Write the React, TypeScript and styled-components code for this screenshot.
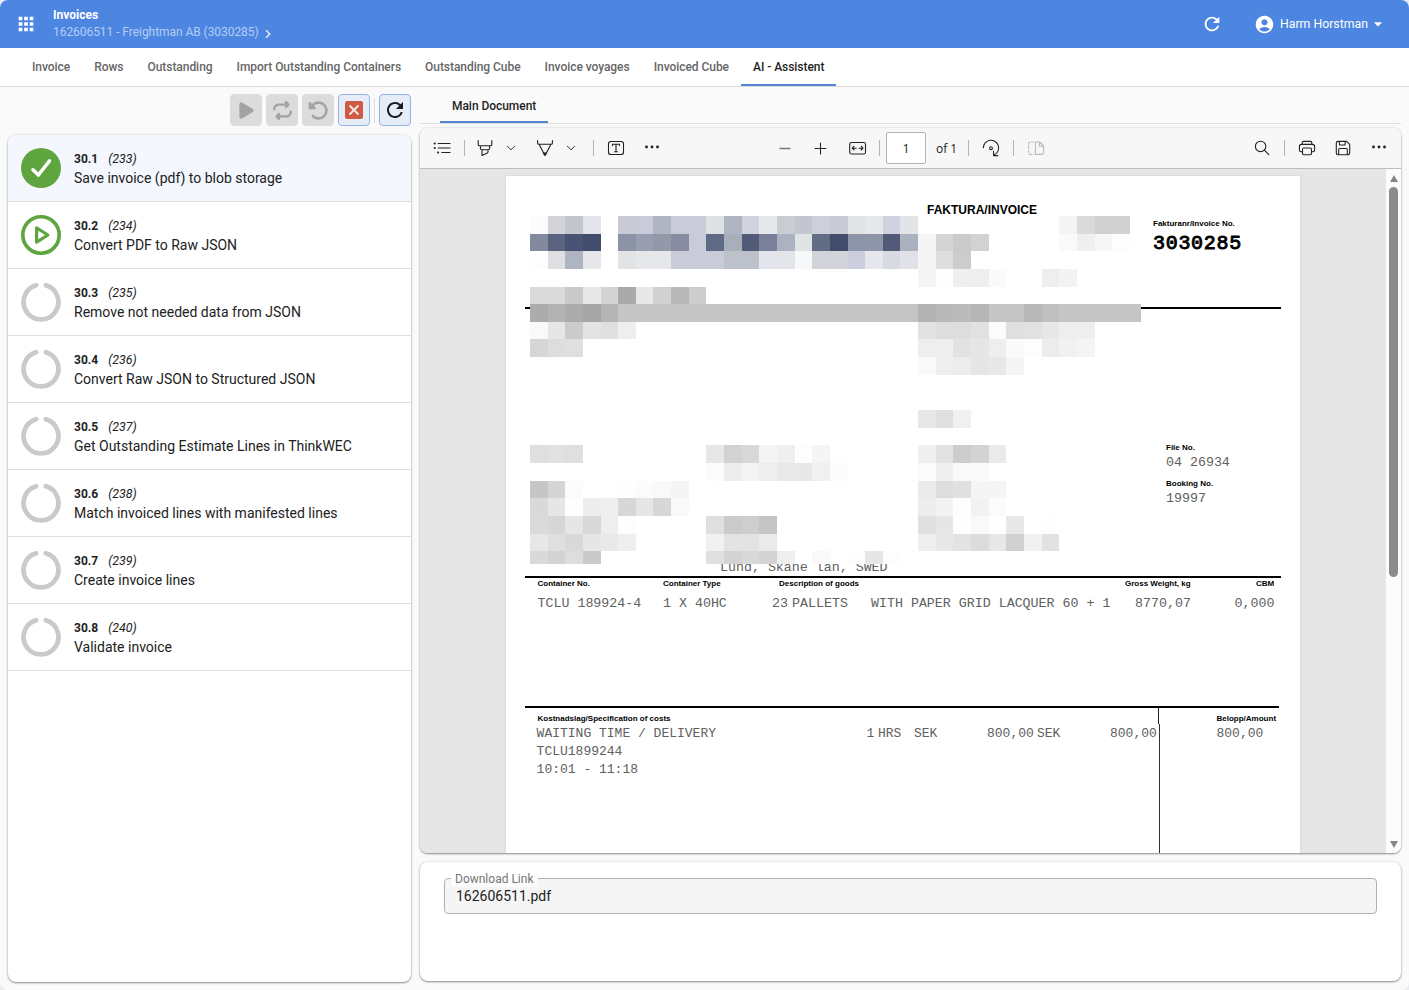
import React from "react";
import styled, { createGlobalStyle, css } from "styled-components";
import { MdApps, MdRefresh, MdAccountCircle, MdArrowDropDown } from "react-icons/md";
import { FaPlay, FaRepeat, FaRotateLeft } from "react-icons/fa6";

const Global = createGlobalStyle`
  * { box-sizing: border-box; }
  body { margin: 0; background: #e9ecf1; font-family: Roboto, sans-serif; color: #212121; }
`;

const Shell = styled.div`
  width: 1409px;
  height: 990px;
  display: flex;
  flex-direction: column;
  background: #fafafa;
  border-radius: 8px;
  overflow: hidden;
`;

/* ---------- application header ---------- */

const Header = styled.header`
  height: 48px;
  flex: none;
  display: flex;
  align-items: center;
  padding: 0 21px 0 15px;
  background: #4d86e1;
  color: #fff;
  svg { flex: none; }
`;

const Crumbs = styled.div`
  flex: 1;
  margin-left: 16px;
  font-size: 12px;
  line-height: 17px;
`;

const CrumbTitle = styled.div`
  font-weight: 700;
`;

const CrumbPath = styled.div`
  display: flex;
  align-items: center;
  color: #b5cdf5;
  font-size: 12px;
  letter-spacing: -0.05px;
  svg { margin: 2px 0 0 5px; }
`;

const User = styled.div`
  display: flex;
  align-items: center;
  margin-left: 31px;
  font-size: 12.3px;
  span { margin: 0 0 1px 5px; }
`;

const Tabs = styled.nav<{ $inner?: boolean }>`
  display: flex;
  flex: none;
  height: ${(p) => (p.$inner ? 37 : 39)}px;
  padding-left: 20px;
  background: ${(p) => (p.$inner ? "transparent" : "#fff")};
  border-bottom: 1px solid #dcdcdc;
`;

const Tab = styled.div<{ $active?: boolean; $drop?: number }>`
  display: flex;
  align-items: center;
  padding: ${(p) => p.$drop ?? 0}px 12px 0;
  font-size: 12px;
  font-weight: 500;
  letter-spacing: -0.045px;
  white-space: nowrap;
  color: ${(p) => (p.$active ? "#1f1f1f" : "#666")};
  box-shadow: ${(p) => (p.$active ? "inset 0 -2px 0 #5584d0" : "none")};
`;

/* ---------- columns ---------- */

const Columns = styled.main`
  flex: 1;
  min-height: 0;
  display: grid;
  grid-template-columns: 403px 981px;
  column-gap: 9px;
  padding: 0 8px;
`;

const Column = styled.section`
  display: flex;
  flex-direction: column;
  min-height: 0;
`;

const Actions = styled.div`
  display: flex;
  justify-content: flex-end;
  align-items: flex-start;
  gap: 4px;
  height: 48px;
  padding-top: 7px;
  flex: none;
`;

const ActionButton = styled.button<{ $enabled?: boolean }>`
  width: 32px;
  height: 32px;
  padding: 0;
  display: flex;
  align-items: center;
  justify-content: center;
  border-radius: 4px;
  border: 1px solid #dcdcdc;
  background: #dcdcdc;
  color: #a3a3a3;
  ${(p) =>
    p.$enabled &&
    css`
      border-color: #93b3ea;
      background: #e6edf9;
      color: #1b1b1b;
    `}
`;

const ActionDivider = styled.div`
  width: 1px;
  height: 25px;
  margin-top: 4px;
  background: #ddd;
`;

const Card = styled.div`
  background: #fff;
  border-radius: 8px;
  box-shadow: 0 1px 2px rgba(0, 0, 0, 0.42), 0 0 3px rgba(0, 0, 0, 0.12);
  overflow: hidden;
`;

const StepList = styled(Card)`
  height: 847px;
`;

const Step = styled.div<{ $selected?: boolean }>`
  height: 67px;
  display: flex;
  align-items: center;
  gap: 13px;
  padding-left: 13px;
  border-bottom: 1px solid #dedede;
  background: ${(p) => (p.$selected ? "#f4f8fe" : "#fff")};
`;

const StepMeta = styled.div`
  display: flex;
  gap: 10px;
  padding-top: 1px;
  font-size: 12px;
  line-height: 19px;
  i { font-size: 12.4px; line-height: 17px; }
`;

const StepName = styled.div`
  font-size: 14px;
  line-height: 19px;
`;

/* ---------- document viewer ---------- */

const Viewer = styled(Card)`
  height: 725px;
  margin-top: 4px;
  flex: none;
  display: flex;
  flex-direction: column;
`;

const ViewerBar = styled.div`
  height: 41px;
  flex: none;
  display: flex;
  align-items: center;
  padding: 0 6px;
  background: #f7f7f7;
  border-bottom: 1px solid #bcbcbc;
  color: #222;
  font-size: 13px;
`;

const ToolGroup = styled.div<{ $before?: string }>`
  display: flex;
  align-items: center;
  margin-left: ${(p) => p.$before ?? "0"};
`;

const Tool = styled.span<{ $w?: number; $before?: number }>`
  width: ${(p) => p.$w ?? 32}px;
  height: 32px;
  margin-left: ${(p) => p.$before ?? 0}px;
  display: flex;
  align-items: center;
  justify-content: center;
`;

const ToolDivider = styled.span<{ $before: number; $after: number }>`
  width: 1px;
  height: 16px;
  margin: 0 ${(p) => p.$after}px 0 ${(p) => p.$before}px;
  background: #b4b4b4;
`;

const PageInput = styled.div`
  width: 40px;
  height: 32px;
  display: flex;
  align-items: center;
  justify-content: center;
  border: 1px solid #b3b3b3;
  border-radius: 2px;
  background: #fff;
  font-family: "Open Sans", sans-serif;
  font-size: 12.5px;
`;

const PageTotal = styled.span`
  width: 22px;
  margin-left: 10px;
  padding-top: 1px;
  white-space: nowrap;
  font-family: "Open Sans", sans-serif;
  font-size: 12px;
`;

const ViewerBody = styled.div`
  flex: 1;
  min-height: 0;
  display: flex;
  justify-content: space-between;
  background: #e6e6e6;
`;

const Paper = styled.article`
  position: relative;
  width: 794px;
  margin: 7px 0 0 86px;
  display: flex;
  flex-direction: column;
  background: #fff;
  box-shadow: 0 0 4px rgba(0, 0, 0, 0.08);
  color: #000;
`;

const ScrollTrack = styled.div`
  width: 15px;
  display: flex;
  flex-direction: column;
  align-items: center;
  padding: 6px 0 5px 0;
  background: #fcfcfc;
`;

const ScrollThumb = styled.div`
  width: 9px;
  height: 390px;
  margin: 5px 0 auto;
  border-radius: 5px;
  background: #8b8b8b;
`;

const Arrow = styled.span<{ $down?: boolean }>`
  border: 4.5px solid transparent;
  border-top: ${(p) => (p.$down ? "7px solid #858585" : "0")};
  border-bottom: ${(p) => (p.$down ? "0" : "7px solid #858585")};
`;

/* ---------- invoice page ---------- */

const Small = styled.div`
  font: bold 8px/12px "Liberation Sans", Arial, sans-serif;
  white-space: pre;
`;

const Typed = styled.div<{ $size?: number }>`
  font: ${(p) => p.$size ?? 13.3}px/18px "Liberation Mono", "Courier New", monospace;
  color: #606060;
  white-space: pre;
`;

const Rule = styled.div<{ $right?: number }>`
  height: 2px;
  flex: none;
  margin: 0 ${(p) => p.$right ?? 19}px 0 19px;
  background: #000;
`;

const Letterhead = styled.div`
  display: flex;
  height: 131px;
  padding: 26px 0 0 421px;
`;

const DocTitle = styled.div`
  width: 226px;
  font: bold 12px/16px "Liberation Sans", Arial, sans-serif;
`;

const InvoiceNumber = styled.div`
  padding-top: 16px;
`;

const BigNumber = styled.div`
  margin-top: 2px;
  font: 20px/24px "Liberation Mono", "Courier New", monospace;
  letter-spacing: 0.7px;
  -webkit-text-stroke: 0.9px #000;
`;

const Parties = styled.div`
  height: 267px;
  display: flex;
  flex-direction: column;
  justify-content: space-between;
  padding-top: 133px;
`;

const References = styled.div`
  margin-left: 660px;
  ${Typed} { margin-bottom: 6px; }
`;

const CityLine = styled(Typed)`
  margin: 0 0 -1px 214px;
`;

const Row = styled.div<{ $top?: number }>`
  display: flex;
  margin-top: ${(p) => p.$top ?? 0}px;
`;

const Cell = styled.div<{ $w: number }>`
  width: ${(p) => p.$w}px;
  flex: none;
`;

const Goods = styled.div`
  height: 128px;
  padding-left: 31.5px;
`;

const Costs = styled.div`
  display: flex;
  flex: 1;
`;

const CostLines = styled.div`
  width: 652px;
  padding: 5px 0 0 30.6px;
  ${Small} { padding-left: 1px; }
`;

const CostDivider = styled.div`
  width: 2px;
  display: flex;
  flex-direction: column;
  &::before { content: ""; width: 1px; height: 16px; background: #222; }
  &::after { content: ""; width: 1px; flex: 1; margin-left: 1px; background: #333; }
`;

const Amounts = styled.div`
  padding: 5px 0 0 56.5px;
`;

const Redaction = styled.div`
  position: absolute;
  left: 24px;
  top: 40px;
  display: grid;
  grid-template-columns: repeat(34, 17.648px) 11px;
  grid-template-rows: repeat(19, 17.648px) 12.7px;
`;

const Block = styled.span<{ $r: number; $c: number; $fill: string }>`
  grid-row: ${(p) => p.$r + 1};
  grid-column: ${(p) => p.$c + 1};
  background: ${(p) => p.$fill};
`;

/* Each run: row, first column, space-separated fills (two digits = grey level). */
const runs: [number, number, string][] = [
  [0, 0, "fc d3d4da c3c6cf e4e5ea"],
  [0, 5, "c8cbd6 c9ccd8 b0b5c4 c9cbd8 c9cbd8 dee1e4 b0b5c4 d1d4df e6e8ec c9ccd3 c2c6d0 cdd0d9 c8cbd4 e2e3e5 e6e7ea d0d3df e2e4e8"],
  [0, 30, "f4 da d0 d1"],
  [1, 0, "838a9d 5a6480 475275 424c6b"],
  [1, 5, "8c93a4 979eaf 9499aa 878ca0 c9cbd8 5f6a87 a9afba 515b78 7a809a adb2c2 e0e3e4 626c84 424c6b 8d94a8 8d95a9 515b78 acb1bf f5 d4 cb d2"],
  [1, 30, "fa ef f7 fd"],
  [2, 0, "fd dfe0e4 afb4c3 e6e7ea"],
  [2, 5, "e2e3e5 e6e7ea e6e7ea c9cbd8 c9cbd8 c9ccd8 bcc1ca bcc1cc e4e5ec e4e5ea f7f8fa d3d4da d3d4da cdcedd e6e7ed d8dae1 e1e2e8 f5 de cc"],
  [3, 22, "f5 fe ef ee fa"],
  [3, 29, "ee f3"],
  [4, 0, "da da ca e7 d3 aa e7 d1 b8 cd"],
  [5, 0, "ac b3 ab a5 b5 c5 c5 c5 c5 c5 c5 c5 c5 c5 c5 c5 c5 c5 c5 c5 c5 c5 b3 b9 bb b6 c5 c5 b8 c0 c5 c5 c5 c5 c5"],
  [6, 0, "f9 e6 cb e3 e0 ee"],
  [6, 22, "e2 dd dd e1 fb df e1 e7 ee ee"],
  [7, 0, "d6 dd df"],
  [7, 22, "ee ee e2 e6 ee fa fd ec f1 f4"],
  [8, 22, "fa ef ec e6 e8 f5"],
  [11, 22, "e7 e0 f0"],
  [13, 0, "df e1 df"],
  [13, 10, "e7 d2 d8 f4 ef fd f5"],
  [13, 22, "ef e1 cd d3 ea"],
  [14, 10, "fb ed f4 ee e9 e8 f0 fb"],
  [14, 22, "fb ef f9 fa"],
  [15, 0, "c6 d5 fb ff ff fe fb f9 f5"],
  [15, 22, "ea dd e0 f5 f5"],
  [16, 0, "d9 e6 fe ed ef d7 e6 d7 f9"],
  [16, 22, "ed f3 fe f2 fb"],
  [17, 0, "da d7 e6 d8 ee fd"],
  [17, 10, "df cb ce c5"],
  [17, 22, "e0 e6 fe f9 ff e8 ff fe"],
  [18, 0, "e7 df d9 e6 e9 ef"],
  [18, 10, "f1 e3 e3 ea"],
  [18, 22, "ef e7 e3 dc e7 d0 f1 e2"],
  [19, 0, "d9 d3 dd ca"],
  [19, 10, "e0 d3 d9 d3 ef ff f9 ff fd e6 fd"],
];

/* ---------- download card ---------- */

const DownloadCard = styled(Card)`
  height: 119px;
  margin-top: 9px;
  padding: 16px 24px;
  flex: none;
`;

const Field = styled.div`
  position: relative;
  height: 36px;
  padding-left: 11px;
  border: 1px solid #b0b0b0;
  border-radius: 4px;
  background: #f5f5f5;
  font-size: 14px;
  line-height: 35px;
`;

const FieldLabel = styled.label`
  position: absolute;
  left: 6px;
  top: -8px;
  padding: 0 4px;
  font-size: 12px;
  line-height: 16px;
  color: #777;
  background: linear-gradient(#fff 8px, #fbfbfb 8px);
`;

/* ---------- drawings ---------- */

const Icon = ({ w = 20, h = 20, children }: { w?: number; h?: number; children: React.ReactNode }) => (
  <svg width={w} height={h} viewBox={`0 0 ${w} ${h}`} fill="none" stroke="currentColor" strokeWidth="1.1" strokeLinejoin="round" strokeLinecap="round">
    {children}
  </svg>
);

const StatusIcon = ({ state }: { state: string }) => (
  <svg width="40" height="40" viewBox="0 0 40 40" fill="none" strokeLinecap="round" strokeLinejoin="round">
    {state === "done" && (
      <>
        <circle cx="20" cy="20" r="20" fill="#5ea540" />
        <path d="M12 21.8 L17.4 27 L28.4 13" stroke="#fff" strokeWidth="3.6" />
      </>
    )}
    {state === "running" && (
      <>
        <circle cx="20" cy="20" r="18.2" stroke="#5ea540" strokeWidth="3.6" />
        <path d="M15.6 12.9 V27.1 L26.9 20 Z" stroke="#5ea540" strokeWidth="3.2" />
      </>
    )}
    {state === "waiting" && <path d="M24.9 3.3 A17.4 17.4 0 1 1 15.1 3.3" stroke="#cacaca" strokeWidth="4.8" />}
  </svg>
);

const Chevron = () => (
  <Icon w={10} h={8}><path d="M1.3 2.2 L5 5.8 L8.7 2.2" strokeWidth="0.9" /></Icon>
);

const Dots = () => (
  <Icon w={16} h={6}>
    {[2.5, 8, 13.5].map((x) => <circle key={x} cx={x} cy="2" r="1.45" fill="currentColor" stroke="none" />)}
  </Icon>
);

const steps = [
  ["30.1", 233, "Save invoice (pdf) to blob storage", "done"],
  ["30.2", 234, "Convert PDF to Raw JSON", "running"],
  ["30.3", 235, "Remove not needed data from JSON", "waiting"],
  ["30.4", 236, "Convert Raw JSON to Structured JSON", "waiting"],
  ["30.5", 237, "Get Outstanding Estimate Lines in ThinkWEC", "waiting"],
  ["30.6", 238, "Match invoiced lines with manifested lines", "waiting"],
  ["30.7", 239, "Create invoice lines", "waiting"],
  ["30.8", 240, "Validate invoice", "waiting"],
] as const;

const tabs = ["Invoice", "Rows", "Outstanding", "Import Outstanding Containers", "Outstanding Cube", "Invoice voyages", "Invoiced Cube", "AI - Assistent"];

const InvoicePage = () => (
  <Paper>
    <Letterhead>
      <DocTitle>FAKTURA/INVOICE</DocTitle>
      <InvoiceNumber>
        <Small>Fakturanr/Invoice No.</Small>
        <BigNumber>3030285</BigNumber>
      </InvoiceNumber>
    </Letterhead>
    <Rule />
    <Parties>
      <References>
        <Small>File No.</Small>
        <Typed>04 26934</Typed>
        <Small>Booking No.</Small>
        <Typed>19997</Typed>
      </References>
      <CityLine>Lund, Skåne lan, SWED</CityLine>
    </Parties>
    <Rule />
    <Goods>
      <Row>
        <Cell $w={125.5}><Small>Container No.</Small></Cell>
        <Cell $w={116}><Small>Container Type</Small></Cell>
        <Cell $w={346}><Small>Description of goods</Small></Cell>
        <Cell $w={131}><Small>Gross Weight, kg</Small></Cell>
        <Small>CBM</Small>
      </Row>
      <Row $top={5}>
        <Cell $w={125.5}><Typed>TCLU 189924-4</Typed></Cell>
        <Cell $w={109}><Typed>1 X 40HC</Typed></Cell>
        <Cell $w={20}><Typed>23</Typed></Cell>
        <Cell $w={79}><Typed>PALLETS</Typed></Cell>
        <Cell $w={264}><Typed>WITH PAPER GRID LACQUER 60 + 1</Typed></Cell>
        <Cell $w={99.5}><Typed>8770,07</Typed></Cell>
        <Typed>0,000</Typed>
      </Row>
    </Goods>
    <Rule $right={21} />
    <Costs>
      <CostLines>
        <Small>Kostnadslag/Specification of costs</Small>
        <Row>
          <Cell $w={329.9}><Typed $size={13}>WAITING TIME / DELIVERY</Typed></Cell>
          <Cell $w={11.5}><Typed $size={13}>1</Typed></Cell>
          <Cell $w={36}><Typed $size={13}>HRS</Typed></Cell>
          <Cell $w={73}><Typed $size={13}>SEK</Typed></Cell>
          <Cell $w={50}><Typed $size={13}>800,00</Typed></Cell>
          <Cell $w={73}><Typed $size={13}>SEK</Typed></Cell>
          <Typed $size={13}>800,00</Typed>
        </Row>
        <Typed $size={13}>TCLU1899244</Typed>
        <Typed $size={13}>10:01 - 11:18</Typed>
      </CostLines>
      <CostDivider />
      <Amounts>
        <Small>Belopp/Amount</Small>
        <Typed $size={13}>800,00</Typed>
      </Amounts>
    </Costs>
    <Redaction>
      {runs.flatMap(([r, c, fills]) =>
        fills.split(" ").map((f, i) => (
          <Block key={`${r}-${c + i}`} $r={r} $c={c + i} $fill={`#${f.length === 2 ? f + f + f : f}`} />
        ))
      )}
    </Redaction>
  </Paper>
);

const Toolbar = () => (
  <ViewerBar>
    <ToolGroup>
      <Tool>
        <Icon>
          <path d="M6.2 5.5 H18 M6.2 10 H18 M9.8 14.5 H18" strokeWidth="1.2" />
          <path d="M2.6 5.5 h.2 M2.6 10 h.2 M6 14.5 h.2" strokeWidth="1.9" />
        </Icon>
      </Tool>
      <ToolDivider $before={6} $after={4} />
      <Tool>
        <Icon>
          <path d="M3.2 2.5 V6.5 Q3.2 7.8 4.5 7.8 H15.5 Q16.8 7.8 16.8 6.5 V2.5 M5.4 8 V10.2 Q5.4 11.7 6.9 11.7 H13.1 Q14.6 11.7 14.6 10.2 V8 M7 11.8 V17.4 L12.3 14.9 Q13 14.5 13 13.8 V11.8" />
        </Icon>
      </Tool>
      <Tool $w={20}><Chevron /></Tool>
      <Tool $before={8}>
        <Icon>
          <path d="M2.6 2.5 V5 Q2.6 6.3 3.9 6.3 H16.1 Q17.4 6.3 17.4 5 V2.5 M4.2 6.5 L9.4 16.6 Q10 17.6 10.6 16.6 L15.8 6.5" />
          <path d="M8.4 14.8 H11.6 L10.4 17.2 H9.6 Z" fill="currentColor" strokeWidth="0.6" />
        </Icon>
      </Tool>
      <Tool $w={20}><Chevron /></Tool>
      <ToolDivider $before={12} $after={6} />
      <Tool>
        <Icon>
          <rect x="2.5" y="3.5" width="15" height="13" rx="2.3" />
          <path d="M6.5 7.6 V6.3 H13.5 V7.6 M10 6.3 V13.8 M8.6 13.8 H11.4" />
        </Icon>
      </Tool>
      <Tool $before={4}><Dots /></Tool>
    </ToolGroup>
    <ToolGroup $before="101px">
      <Tool><Icon><path d="M5 10.5 H15" stroke="#777" strokeWidth="1.3" /></Icon></Tool>
      <Tool $before={3}><Icon><path d="M5 10.5 H16 M10.5 5 V16" /></Icon></Tool>
      <Tool $before={6}>
        <Icon>
          <rect x="1.7" y="4.5" width="15.8" height="11.5" rx="1.8" />
          <path d="M4.4 10.2 H8.2 M11 10.2 H14.8 M6 8.4 L4.2 10.2 L6 12 M13.2 8.4 L15 10.2 L13.2 12" />
        </Icon>
      </Tool>
      <ToolDivider $before={5} $after={6} />
      <PageInput>1</PageInput>
      <PageTotal>of 1</PageTotal>
      <ToolDivider $before={10} $after={6} />
      <Tool>
        <Icon>
          <path d="M2.3 9.8 A7.7 7.7 0 1 1 13.5 16.8 M12.6 13.2 V17.6 H16.8" />
          <circle cx="10" cy="10.2" r="1.4" />
        </Icon>
      </Tool>
      <ToolDivider $before={6} $after={6} />
      <Tool>
        <Icon>
          <g stroke="#b9b9b9">
            <path d="M9.4 4 V16.4 H16 Q17.6 16.4 17.6 14.8 V8 L13.6 4 Z M13.4 4.2 V8.2 H17.4" />
            <path d="M7.4 4 H4.2 Q2.6 4 2.6 5.6 V14.8 Q2.6 16.4 4.2 16.4 H7.4" strokeDasharray="2.2 1.8" />
          </g>
        </Icon>
      </Tool>
    </ToolGroup>
    <ToolGroup $before="auto">
      <Tool><Icon><circle cx="8.6" cy="8.4" r="5.2" /><path d="M12.4 12.2 L16.8 16.6" /></Icon></Tool>
      <ToolDivider $before={6} $after={6} />
      <Tool>
        <Icon>
          <path d="M5.5 13.8 H4 Q2.4 13.8 2.4 12.2 V8.6 Q2.4 6.4 4.6 6.4 H15.4 Q17.6 6.4 17.6 8.6 V12.2 Q17.6 13.8 16 13.8 H14.5 M5.2 6.3 V4.8 Q5.2 3.4 6.6 3.4 H13.4 Q14.8 3.4 14.8 4.8 V6.3" />
          <rect x="5.5" y="10" width="9" height="6.7" rx="1.2" />
        </Icon>
      </Tool>
      <Tool $before={4}>
        <Icon>
          <path d="M5 3.4 H13.6 L16.7 6.4 V15 Q16.7 16.7 15 16.7 H5 Q3.3 16.7 3.3 15 V5 Q3.3 3.4 5 3.4 Z M6.3 3.5 V6 Q6.3 7 7.3 7 H11.2 Q12.2 7 12.2 6 V3.5 M5.7 16.6 V11.6 Q5.7 10.5 6.8 10.5 H13.2 Q14.3 10.5 14.3 11.6 V16.6" />
        </Icon>
      </Tool>
      <Tool $before={4}><Dots /></Tool>
    </ToolGroup>
  </ViewerBar>
);

export default function App() {
  return (
    <Shell>
      <Global />
      <Header>
        <MdApps size={22} />
        <Crumbs>
          <CrumbTitle>Invoices</CrumbTitle>
          <CrumbPath>
            162606511 - Freightman AB (3030285)
            <svg width="8" height="10" viewBox="0 0 8 10" fill="none" stroke="#e4eefc" strokeWidth="1.5"><path d="M2 1.2 L5.8 5 L2 8.8" /></svg>
          </CrumbPath>
        </Crumbs>
        <MdRefresh size={22} />
        <User>
          <MdAccountCircle size={21} />
          <span>Harm Horstman</span>
          <MdArrowDropDown size={20} />
        </User>
      </Header>
      <Tabs>
        {tabs.map((t) => <Tab key={t} $active={t === "AI - Assistent"}>{t}</Tab>)}
      </Tabs>
      <Columns>
        <Column>
          <Actions>
            <ActionButton><FaPlay size={19} /></ActionButton>
            <ActionButton><FaRepeat size={19} /></ActionButton>
            <ActionButton><FaRotateLeft size={21} /></ActionButton>
            <ActionButton $enabled>
              <svg width="18" height="18" viewBox="0 0 18 18">
                <rect width="18" height="18" rx="2" fill="#cf5b43" />
                <path d="M4.5 4.5 L13.5 13.5 M13.5 4.5 L4.5 13.5" stroke="#f6e6ea" strokeWidth="1.9" />
              </svg>
            </ActionButton>
            <ActionDivider />
            <ActionButton $enabled><MdRefresh size={24} /></ActionButton>
          </Actions>
          <StepList>
            {steps.map(([no, id, name, state], i) => (
              <Step key={no} $selected={i === 0}>
                <StatusIcon state={state} />
                <div>
                  <StepMeta><b>{no}</b><i>({id})</i></StepMeta>
                  <StepName>{name}</StepName>
                </div>
              </Step>
            ))}
          </StepList>
        </Column>
        <Column>
          <Tabs $inner><Tab $active $drop={2}>Main Document</Tab></Tabs>
          <Viewer>
            <Toolbar />
            <ViewerBody>
              <InvoicePage />
              <ScrollTrack><Arrow /><ScrollThumb /><Arrow $down /></ScrollTrack>
            </ViewerBody>
          </Viewer>
          <DownloadCard>
            <Field>
              <FieldLabel>Download Link</FieldLabel>
              162606511.pdf
            </Field>
          </DownloadCard>
        </Column>
      </Columns>
    </Shell>
  );
}
